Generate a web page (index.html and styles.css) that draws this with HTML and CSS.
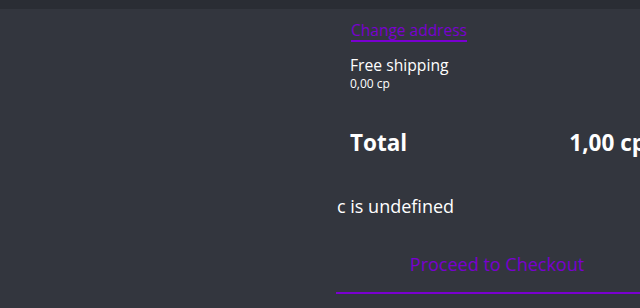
FILE: index.html
```html
<!DOCTYPE html>
<html>
<head>
<meta charset="utf-8">
<link rel="stylesheet" href="styles.css">
</head>
<body>
<div class="topbar"></div>
<main class="summary">
  <div class="address">
    <a class="change" href="#">Change address</a>
  </div>
  <div class="shipping">
    <div class="ship-name">Free shipping</div>
    <div class="ship-price">0,00 cp</div>
  </div>
  <div class="total">
    <span class="total-label">Total</span>
    <span class="total-value">1,00 cp</span>
  </div>
  <div class="error">c is undefined</div>
  <button class="checkout">Proceed to Checkout</button>
</main>
</body>
</html>
```
FILE: styles.css
```css
html, body {
  margin: 0;
  padding: 0;
  background: #33363e;
  overflow: hidden;
  height: 308px;
}
body {
  font-family: "Open Sans", "Noto Sans", sans-serif;
  color: #ffffff;
}
.topbar {
  position: fixed;
  top: 0;
  left: 0;
  right: 0;
  height: 9px;
  background: #2a2d34;
}
.summary {
  margin-left: 336px;
  width: 322px;
  padding-top: 19px;
  display: flex;
  flex-direction: column;
}
.address {
  padding-left: 15px;
}
.change {
  display: inline-block;
  font-size: 15.5px;
  line-height: 20px;
  color: #7a00d0;
  text-decoration: none;
  border-bottom: 2px solid #7a00d0;
}
.shipping {
  padding-left: 14px;
  margin-top: 12px;
}
.ship-name {
  font-size: 15.7px;
  line-height: 22px;
}
.ship-price {
  font-size: 12px;
  line-height: 16px;
}
.total {
  display: flex;
  justify-content: space-between;
  padding-left: 14px;
  padding-right: 12px;
  margin-top: 36px;
  font-size: 22.5px;
  font-weight: 700;
  line-height: 30px;
}
.error {
  margin-top: 36px;
  padding-left: 1px;
  font-size: 18px;
  line-height: 24px;
}
.checkout {
  margin-top: 18px;
  width: 322px;
  height: 58px;
  background: transparent;
  border: none;
  border-bottom: 2px solid #7a00d0;
  color: #7a00d0;
  font-family: "Open Sans", "Noto Sans", sans-serif;
  font-size: 18px;
  padding: 0;
  text-align: center;
}
```
